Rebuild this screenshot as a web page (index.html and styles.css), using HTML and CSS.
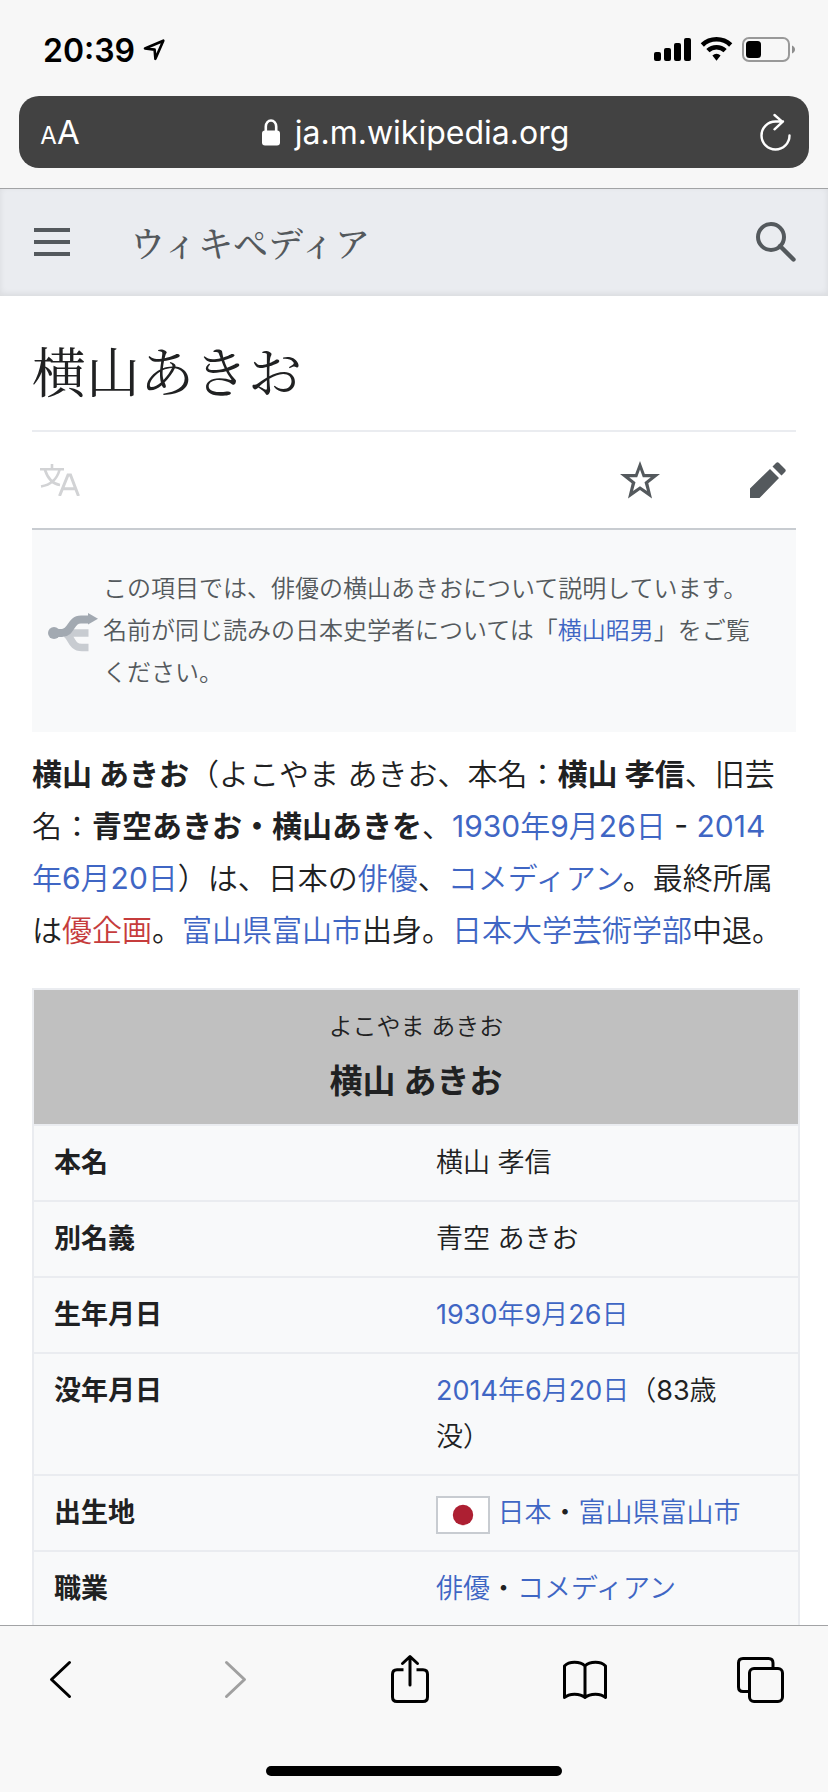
FILE: index.html
```html
<!DOCTYPE html>
<html lang="ja">
<head>
<meta charset="utf-8">
<meta name="viewport" content="width=device-width, initial-scale=1">
<title>横山あきお - Wikipedia</title>
<link rel="stylesheet" href="styles.css">
</head>
<body>
<div class="screen">
  <div class="chrome-top">
    <div class="status">
      <span class="status-time">20:39</span>
      <svg class="status-location" viewBox="0 0 22 22" width="22" height="22" aria-hidden="true"><path d="M2 9.5 20.3 1.7 12.4 19.8 11.6 10.6Z" fill="none" stroke="#000" stroke-width="2.6" stroke-linejoin="round"/></svg>
      <svg class="status-icons" viewBox="0 0 142 28" width="142" height="28" aria-hidden="true">
        <rect x="0" y="16" width="7" height="9" rx="2"/><rect x="10" y="12" width="7" height="13" rx="2"/><rect x="20" y="7" width="7" height="18" rx="2"/><rect x="30" y="2" width="7" height="23" rx="2"/>
        <g fill="none" stroke="#000" stroke-width="4.6"><path d="M48.3 9a20.5 20.5 0 0 1 28.4 0"/><path d="M53.9 14.7a12.4 12.4 0 0 1 17.2 0"/></g>
        <path d="M58.4 19.4a6.200 6.200 0 0 1 8.200 0L62.500 24.800Z"/>
        <rect x="89" y="2" width="46" height="23" rx="6" fill="none" stroke="#999" stroke-width="2"/><rect x="92" y="5" width="15" height="17" rx="3.500"/><path d="M138 9.500c4 1.500 4 6.500 0 8z" fill="#8e8e8e"/>
      </svg>
    </div>
    <div class="address">
      <button class="address-button text-size" type="button" aria-label="文字サイズ"><span class="text-size-small">A</span><span>A</span></button>
      <div class="address-url">
        <svg viewBox="0 0 18 27" width="18" height="27" aria-hidden="true"><rect y="11.500" width="18" height="15" rx="3" fill="#fff"/><path d="M3.800 13V7.500a5.200 6 0 0 1 10.400 0V13" fill="none" stroke="#fff" stroke-width="2.600"/></svg>
        <span>ja.m.wikipedia.org</span>
      </div>
      <button class="address-button reload" type="button" aria-label="再読み込み"><svg viewBox="0 0 32 38" width="32" height="38"><path d="M30.500 22.500A14 14 0 1 1 16.500 8.500H24M15.500 2l8 6.800-8 7.500" fill="none" stroke="#fff" stroke-width="2.400" stroke-linecap="round" stroke-linejoin="round"/></svg></button>
    </div>
  </div>

  <main class="page">
    <header class="site-header">
      <button class="icon-button" type="button" aria-label="メニュー"><svg viewBox="0 0 36 28" width="36" height="28"><path d="M0 2H36M0 14H36M0 26H36" stroke="#54595d" stroke-width="4"/></svg></button>
      <a class="wordmark" href="#">ウィキペディア</a>
      <button class="icon-button" type="button" aria-label="検索"><svg viewBox="0 0 40 40" width="40" height="40"><circle cx="15" cy="15" r="13" fill="none" stroke="#54595d" stroke-width="4"/><path d="M24 24 37.500 37.500" stroke="#54595d" stroke-width="4.400" stroke-linecap="round"/></svg></button>
    </header>

    <article class="article">
      <h1 class="title">横山あきお</h1>
      <div class="actions">
        <button class="icon-button" type="button" aria-label="言語"><svg viewBox="0 0 40 32" width="40" height="32"><g fill="none" stroke="#d2d3d5" stroke-width="2.600"><path d="M12 0V5M0 5.300H24M5 6C8 15 13 20 20 21M19.500 6C17 15 10 21 1 22.500"/><path d="M19.500 32 28 11H30.500L38.500 32M22.500 24.700H35.500" stroke-width="3"/></g></svg></button>
        <button class="icon-button action-watch" type="button" aria-label="ウォッチリストに追加"><svg viewBox="0 0 40 38" width="40" height="38"><path fill="#54595d" fill-rule="evenodd" d="M20 0 24.800 13H40L28.300 22.300 32 37.500 20 29 8 37.500 11.700 22.300 0 13H15.200ZM20 8.500 17.200 16.200H9.200L15.500 21.200 13 30 20 25.200 27 30 24.500 21.200 30.800 16.200H22.800Z"/></svg></button>
        <button class="icon-button" type="button" aria-label="編集"><svg viewBox="0 0 36 36" width="36" height="36"><path fill="#54595d" d="M0 26.500 20 7 29 16 9.500 36H0ZM22.500 4.500 26 1Q27.500-.5 29 1L35 7Q36.500 8.500 35 10L31.500 13.500Z"/></svg></button>
      </div>

      <div class="hatnote">
        <svg class="hatnote-icon" viewBox="0 0 50 40" width="50" height="40" aria-hidden="true"><path d="M16 20H40.500M17 21C24 22 22 34.500 34 34.500H40.500" fill="none" stroke="#c8ccd1" stroke-width="7.500"/><circle cx="6" cy="20" r="6" fill="#a2a9b1"/><path d="M6 20H14C24 20 22 6.500 33 6.500H41" fill="none" stroke="#a2a9b1" stroke-width="8"/><path d="M40 0 50 5.800 40 11.500Z" fill="#a2a9b1"/></svg>
        <p class="hatnote-text">この項目では、俳優の横山あきおについて説明しています。名前が同じ読みの日本史学者については「<a href="#">横山昭男</a>」をご覧ください。</p>
      </div>

      <p class="lead"><b>横山 あきお</b>（よこやま あきお、本名：<b>横山 孝信</b>、旧芸名：<b>青空あきお・横山あきを</b>、<a href="#">1930年9月26日</a> - <a href="#">2014年6月20日</a>）は、日本の<a href="#">俳優</a>、<a href="#">コメディアン</a>。最終所属は<a class="missing" href="#">優企画</a>。<a href="#">富山県富山市</a>出身。<a href="#">日本大学芸術学部</a>中退。</p>

      <table class="infobox">
        <thead>
          <tr><th class="infobox-head" colspan="2" scope="colgroup"><span class="infobox-ruby">よこやま あきお</span><span class="infobox-name">横山 あきお</span></th></tr>
        </thead>
        <tbody>
          <tr><th scope="row">本名</th><td>横山 孝信</td></tr>
          <tr><th scope="row">別名義</th><td>青空 あきお</td></tr>
          <tr><th scope="row">生年月日</th><td><a href="#">1930年9月26日</a></td></tr>
          <tr><th scope="row">没年月日</th><td><a href="#">2014年6月20日</a>（83歳没）</td></tr>
          <tr><th scope="row">出生地</th><td><svg class="flag" viewBox="0 0 54 38" width="54" height="38" role="img" aria-label="日本の旗"><rect x="1" y="1" width="52" height="36" fill="#fff" stroke="#c8ccd1" stroke-width="2"/><circle cx="27" cy="19" r="10.200" fill="#ad1f32"/></svg> <a href="#">日本</a>・<a href="#">富山県富山市</a></td></tr>
          <tr><th scope="row">職業</th><td><a href="#">俳優</a>・<a href="#">コメディアン</a></td></tr>
        </tbody>
      </table>
    </article>
  </main>

  <footer class="chrome-bottom">
    <nav class="toolbar" aria-label="ブラウザ">
      <button class="tool" type="button" aria-label="戻る"><svg viewBox="0 0 60 60"><path d="M39.500 12.500 21.500 29.500 39.500 46.500"/></svg></button>
      <button class="tool" type="button" aria-label="進む" disabled><svg viewBox="0 0 60 60"><path d="M21.500 12.500 39.500 29.500 21.500 46.500"/></svg></button>
      <button class="tool" type="button" aria-label="共有"><svg viewBox="0 0 60 60"><path stroke-linecap="butt" d="M23.500 19.800H17Q12.500 19.800 12.500 24.300V47Q12.500 51.500 17 51.500H43Q47.500 51.500 47.500 47V24.300Q47.500 19.800 43 19.800H36.500"/><path d="M30 35V7M22.500 13.500 30 6.500 37.500 13.500"/></svg></button>
      <button class="tool" type="button" aria-label="ブックマーク"><svg viewBox="0 0 60 60"><path d="M30 16C25 11 14 11 9.500 16V47.500C14 43 25 43 30 47.500C35 43 46 43 50.500 47.500V16C46 11 35 11 30 16ZM30 16V47.500"/></svg></button>
      <button class="tool" type="button" aria-label="タブ"><svg viewBox="0 0 60 60"><path d="M43 18V13Q43 8.500 38.500 8.500H13Q8.500 8.500 8.500 13V37Q8.500 41.500 13 41.500H19"/><rect x="19.500" y="18.500" width="33" height="33" rx="4.500"/></svg></button>
    </nav>
    <div class="home-indicator"></div>
  </footer>
</div>
</body>
</html>
```
FILE: styles.css
```css
* {
  box-sizing: border-box;
}

body {
  margin: 0;
  background: #fff;
  color: #202122;
  font-family: Inter, "Noto Sans CJK JP", sans-serif;
}

button {
  display: flex;
  align-items: center;
  justify-content: center;
  padding: 0;
  border: 0;
  background: none;
  color: inherit;
  font: inherit;
}

svg {
  display: block;
}

a {
  color: #3f66c4;
  text-decoration: none;
}

.screen {
  display: flex;
  flex-direction: column;
  height: 100vh;
}

/* Browser chrome */
.chrome-top {
  flex: none;
  padding: 0 19px 20px;
  border-bottom: 1px solid #a2a3a5;
  background: #f7f7f7;
}

.status {
  display: flex;
  align-items: center;
  gap: 8px;
  height: 96px;
  padding: 4px 13px 0 24px;
  color: #000;
}

.status-time {
  font-size: 32px;
  font-weight: 600;
}

.status-icons {
  margin-left: auto;
}

.address {
  display: flex;
  align-items: center;
  justify-content: space-between;
  height: 72px;
  padding: 0 18px 0 21px;
  border-radius: 20px;
  background: #424242;
  color: #fff;
}

.address-button {
  width: 40px;
  height: 56px;
}

.text-size {
  align-items: baseline;
  line-height: 56px;
  font-size: 33px;
}

.text-size-small {
  font-size: 24px;
}

.reload {
  justify-content: flex-end;
}

.address-url {
  display: flex;
  align-items: center;
  gap: 15px;
  font-size: 32px;
}

.chrome-bottom {
  flex: none;
  padding: 24px 0 16px;
  border-top: 1px solid #a2a3a5;
  background: #f8f8f8;
}

.toolbar {
  display: flex;
  justify-content: space-between;
  padding: 0 38px 0 30px;
}

.tool {
  width: 60px;
  height: 60px;
}

.tool svg {
  width: 60px;
  height: 60px;
  fill: none;
  stroke: #000;
  stroke-width: 3;
  stroke-linecap: round;
  stroke-linejoin: round;
}

.tool:disabled svg {
  stroke: #a0a0a0;
}

.home-indicator {
  width: 296px;
  height: 10px;
  margin: 56px auto 0;
  border-radius: 5px;
  background: #000;
}

/* Page */
.page {
  flex: 1;
  min-height: 0;
  overflow: hidden;
}

.site-header {
  display: flex;
  align-items: center;
  height: 107px;
  padding: 0 32px 2px 34px;
  background: #eaecf0;
  box-shadow: inset 0 -2px 6px rgba(0, 0, 0, 0.08);
}

.wordmark {
  flex: 1;
  padding-left: 60px;
  color: #54595d;
  font-family: "Noto Serif CJK JP", "Noto Sans CJK JP", serif;
  font-size: 35px;
  font-weight: 500;
  line-height: 48px;
}

.article {
  padding: 0 32px;
}

.title {
  margin: 0;
  padding: 34px 0 20px;
  border-bottom: 2px solid #eaecf0;
  font-family: "Noto Serif CJK JP", "Noto Sans CJK JP", serif;
  font-size: 54px;
  font-weight: 400;
  line-height: 80px;
}

.actions {
  display: flex;
  align-items: center;
  height: 98px;
  padding: 0 10px 0 8px;
  border-bottom: 2px solid #c8ccd1;
}

.action-watch {
  margin: 0 90px 0 auto;
}

.hatnote {
  display: flex;
  align-items: center;
  gap: 5px;
  padding: 38px 32px 38px 16px;
  background: #f8f9fa;
  color: #54595d;
  font-size: 24px;
  line-height: 42px;
}

.hatnote-icon {
  flex: none;
  margin-top: 4px;
}

.hatnote-text {
  margin: 0;
}

.hatnote,
.lead,
.infobox {
  font-family: Inter, "Noto Sans CJK JP DemiLight", "Noto Sans CJK JP", sans-serif;
}

.lead {
  margin: 16px 0 32px;
  padding-right: 8px;
  font-size: 30px;
  line-height: 52px;
}

.lead b,
.infobox th {
  font-family: Inter, "Noto Sans CJK JP", sans-serif;
  font-weight: 700;
}

.missing {
  color: #c63c3c;
}

.infobox {
  width: calc(100% + 4px);
  border: 2px solid #eaecf0;
  border-spacing: 0;
  background: #f8f9fa;
  table-layout: fixed;
  font-size: 27px;
  line-height: 46px;
}

.infobox th,
.infobox td {
  padding: 14px 20px;
  border-bottom: 2px solid #eaecf0;
  text-align: left;
  vertical-align: top;
}

.infobox td {
  padding-right: 48px;
}

.infobox .infobox-head {
  padding-bottom: 12px;
  background: #c0c0c0;
  text-align: center;
}

.infobox-ruby,
.infobox-name {
  display: block;
}

.infobox-ruby {
  font-size: 24px;
  font-weight: 350;
}

.infobox-name {
  font-size: 33px;
  line-height: 62px;
}

.flag {
  display: inline-block;
  vertical-align: middle;
}
```
